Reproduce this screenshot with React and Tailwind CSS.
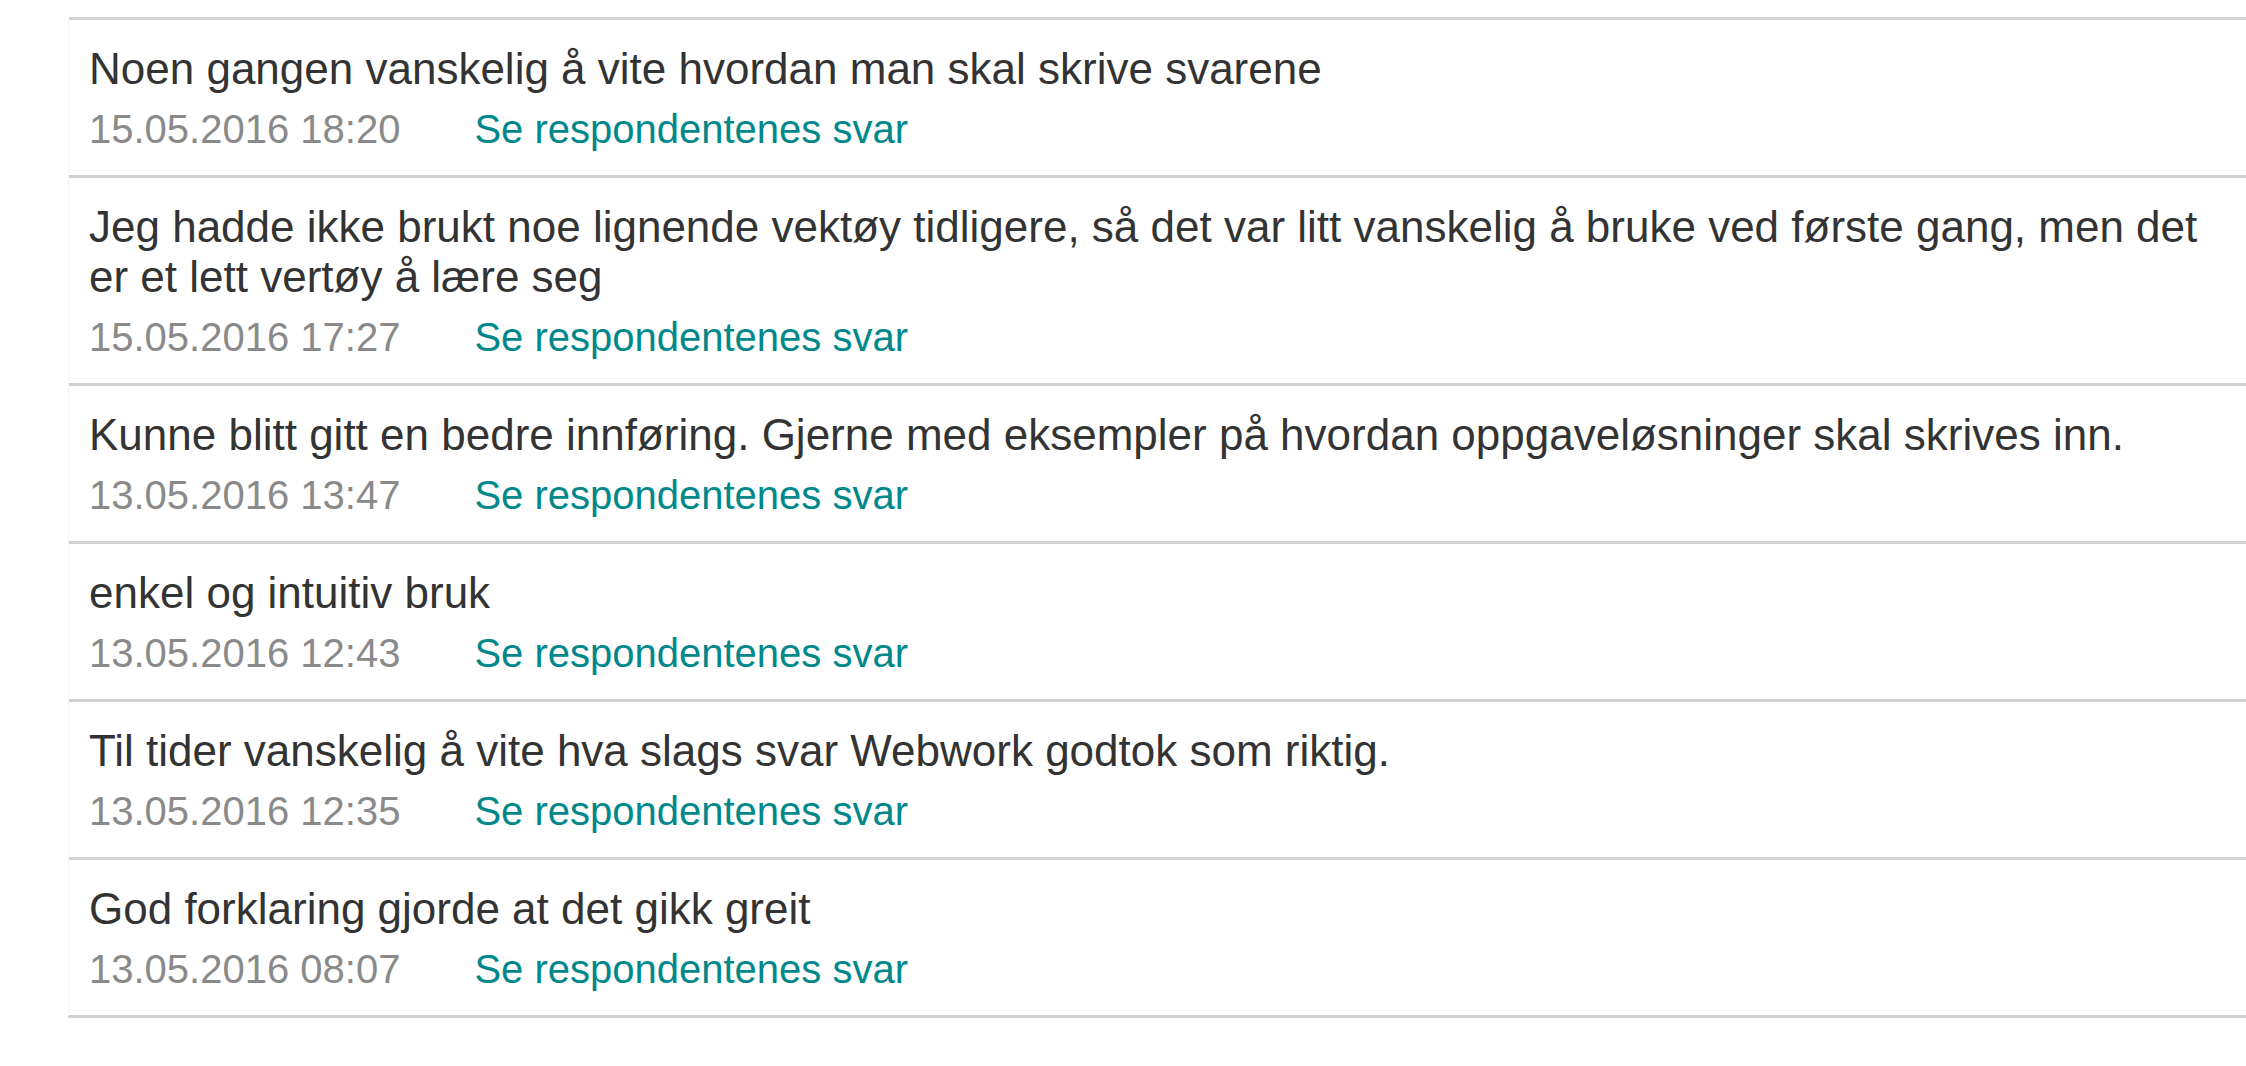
import React from 'react';

const answers = [
  { text: 'Noen gangen vanskelig å vite hvordan man skal skrive svarene', date: '15.05.2016 18:20' },
  {
    text: 'Jeg hadde ikke brukt noe lignende vektøy tidligere, så det var litt vanskelig å bruke ved første gang, men det er et lett vertøy å lære seg',
    date: '15.05.2016 17:27',
  },
  { text: 'Kunne blitt gitt en bedre innføring. Gjerne med eksempler på hvordan oppgaveløsninger skal skrives inn.', date: '13.05.2016 13:47' },
  { text: 'enkel og intuitiv bruk', date: '13.05.2016 12:43' },
  { text: 'Til tider vanskelig å vite hva slags svar Webwork godtok som riktig.', date: '13.05.2016 12:35' },
  { text: 'God forklaring gjorde at det gikk greit', date: '13.05.2016 08:07' },
];

const AnswerRow = ({ text, date }) => (
  <li className="border-t-[3px] border-[#d1d1d1] pl-[20px] pr-[20px] pt-[24px] pb-[23px]">
    <p className="text-[44px] leading-[50px] text-[#333333]">{text}</p>
    <div className="mt-[12px] flex items-baseline text-[40px] leading-[46px]">
      <span className="text-[#8a8a8a]">{date}</span>
      <a href="#" className="ml-[74px] text-[#00888a]">
        Se respondentenes svar
      </a>
    </div>
  </li>
);

export default function App() {
  return (
    <div className="min-h-screen bg-white pt-[17px]" style={{ fontFamily: '"Liberation Sans", Arial, sans-serif' }}>
      <ul className="ml-[68px] border-b-[3px] border-l border-b-[#d1d1d1] border-l-[#f6f6f6]">
        {answers.map((a) => (
          <AnswerRow key={a.date} text={a.text} date={a.date} />
        ))}
      </ul>
    </div>
  );
}
